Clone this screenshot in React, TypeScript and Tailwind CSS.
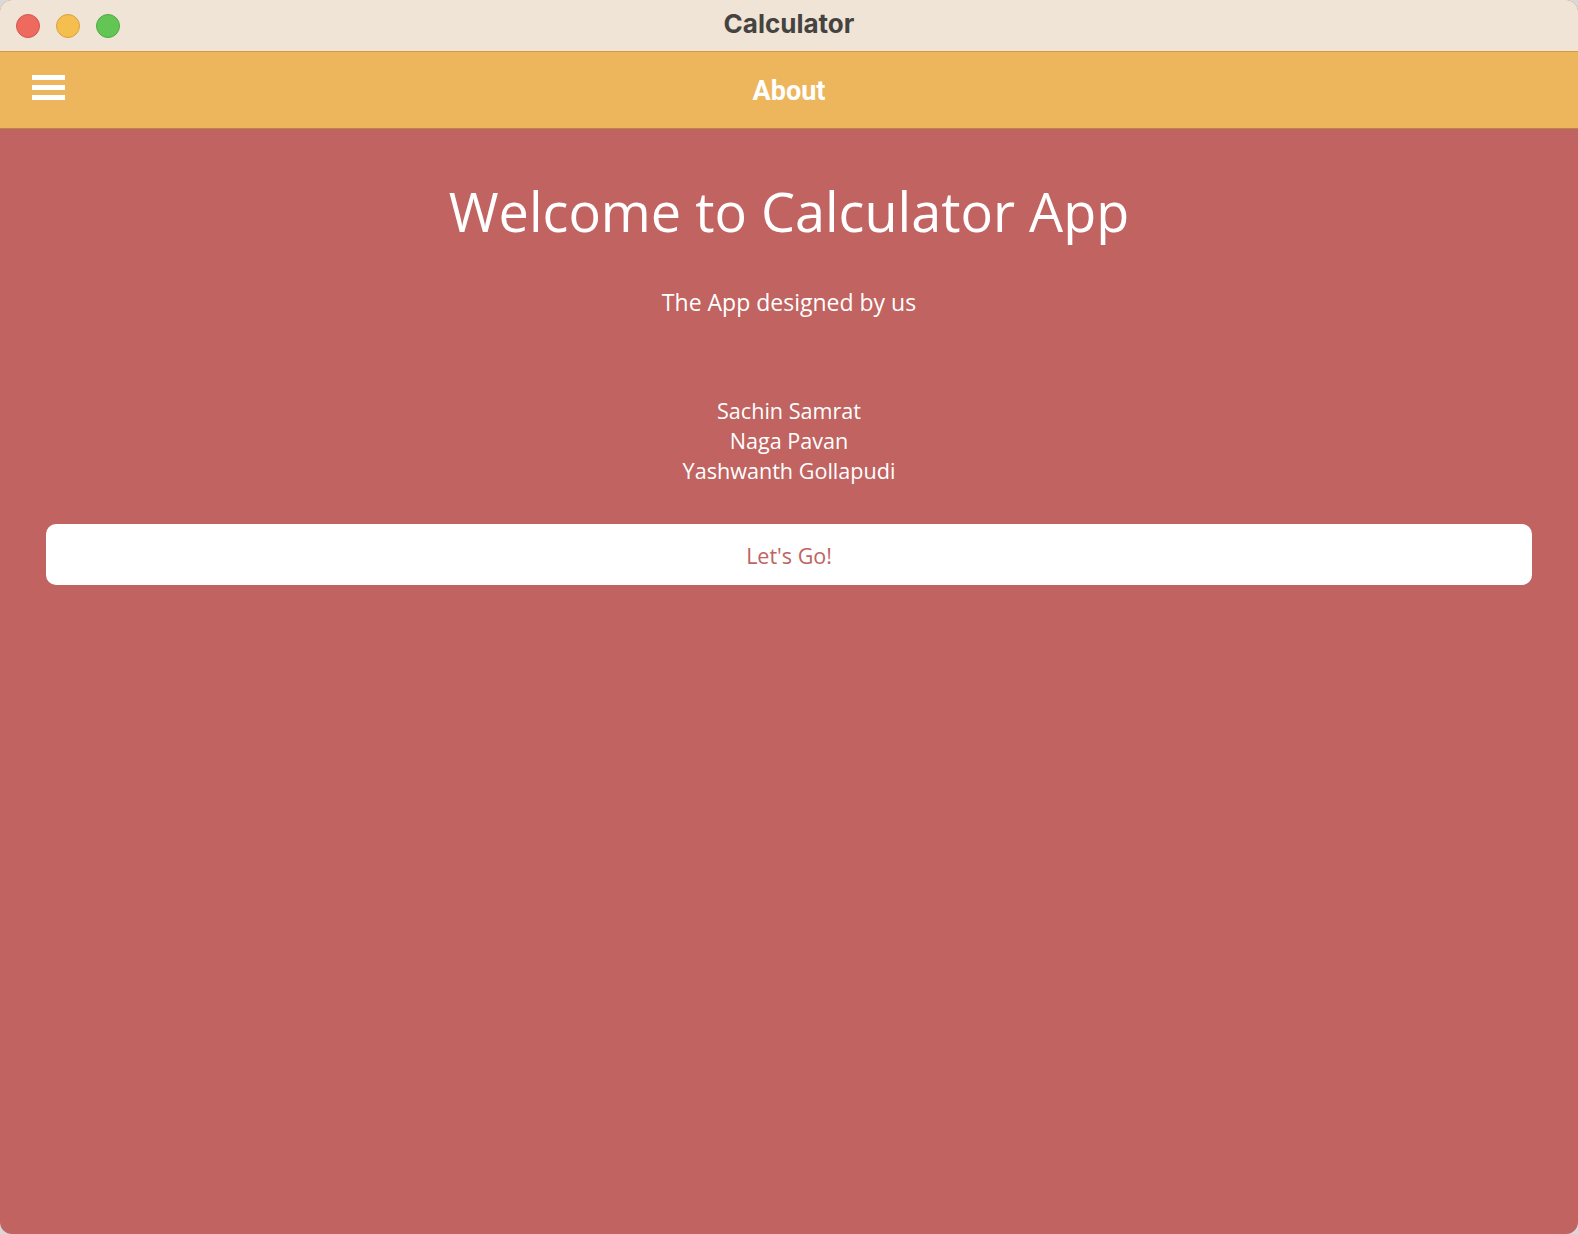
import React from "react";

const TrafficLights = () => (
  <div className="flex items-center gap-4 pl-4">
    <span className="h-6 w-6 rounded-full bg-[#ee6a5f] border border-[#d5554b]" />
    <span className="h-6 w-6 rounded-full bg-[#f5bf4f] border border-[#d9a23a]" />
    <span className="h-6 w-6 rounded-full bg-[#62c554] border border-[#4fac43]" />
  </div>
);

const Hamburger = () => (
  <div className="mb-[5px] flex w-[33px] flex-col gap-[5px]">
    <span className="h-[5px] w-full bg-white" />
    <span className="h-[5px] w-full bg-white" />
    <span className="h-[5px] w-full bg-white" />
  </div>
);

export default function App() {
  const team = ["Sachin Samrat", "Naga Pavan", "Yashwanth Gollapudi"];

  return (
    <div className="h-[1234px] w-[1578px] bg-[#d9d9d9]">
      <div className="flex h-full flex-col overflow-hidden rounded-[12px] bg-[#c06361]">
        {/* window chrome */}
        <div className="relative flex h-[52px] shrink-0 items-center border-b border-[#d39a3f] bg-[#f0e4d7]">
          <TrafficLights />
          <div className="absolute inset-0 flex items-center justify-center pb-[5px] font-['Inter',sans-serif] text-[26px] font-bold text-[#454340]">
            Calculator
          </div>
        </div>

        {/* app header */}
        <div className="relative flex h-[77px] shrink-0 items-center border-b border-[#b7874a] bg-[#edb65d] px-8">
          <Hamburger />
          <div className="absolute inset-0 flex items-center justify-center pt-[2px] font-['Roboto',sans-serif] text-[27px] font-bold text-white">
            About
          </div>
        </div>

        {/* content */}
        <main className="flex flex-col items-center px-[46px] pt-[44px] font-['Open_Sans',sans-serif] text-white">
          <h1 className="text-[54px] leading-[76px] font-normal">Welcome to Calculator App</h1>
          <p className="mt-[38px] text-[23px] leading-[30px]">The App designed by us</p>
          <div className="mt-[79px] flex flex-col items-center text-[21.6px] leading-[30px]">
            {team.map((name) => (
              <span key={name}>{name}</span>
            ))}
          </div>
          <button className="mt-[38px] h-[61px] w-full rounded-[10px] bg-white pt-[3px] text-[21.5px] text-[#c06361]">
            Let's Go!
          </button>
        </main>
      </div>
    </div>
  );
}
